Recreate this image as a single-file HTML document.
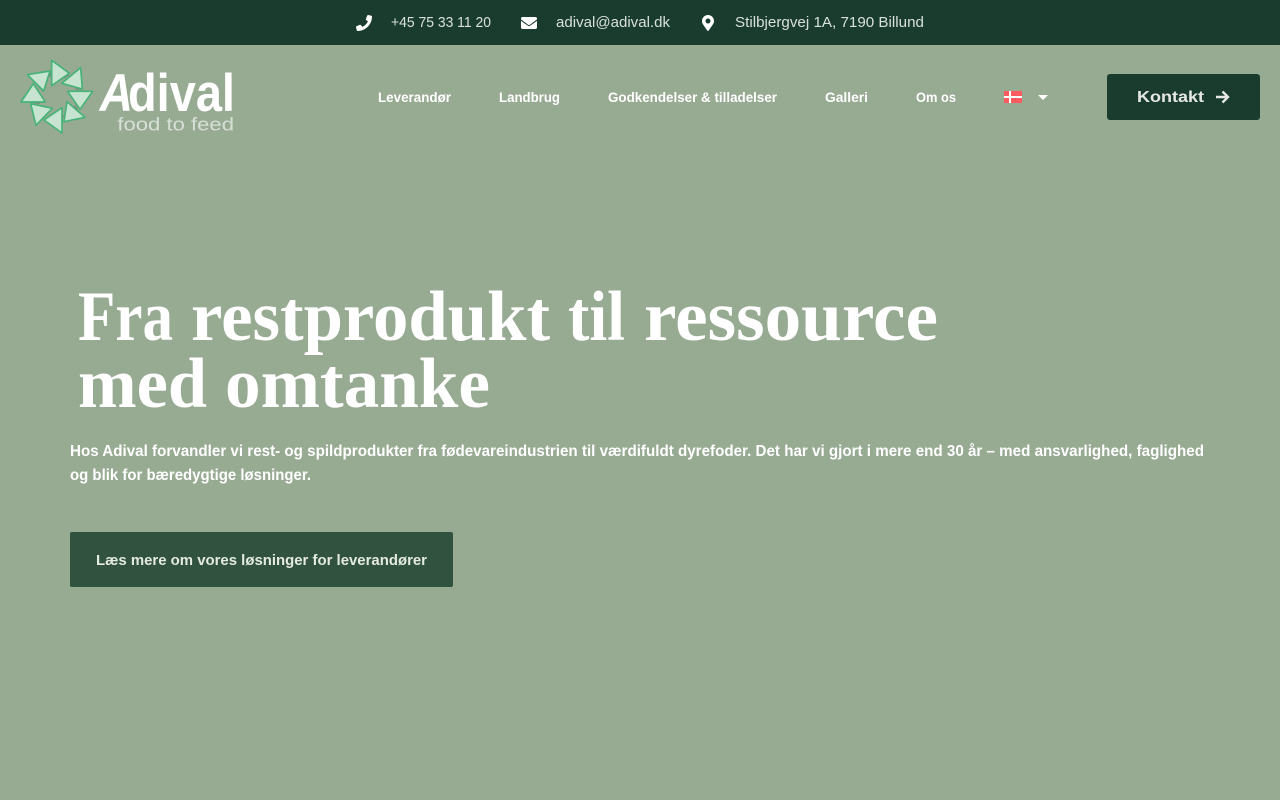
<!DOCTYPE html>
<html lang="da"><head><meta charset="utf-8"><title>Adival</title>
<style>
html,body{margin:0;padding:0;width:1280px;height:800px;overflow:hidden;background:#97aa92}
svg{display:block;position:absolute;left:0;top:0}
.top{font:400 15px "Liberation Sans",sans-serif;fill:#d8e0db}
.nav{font:700 14px "Liberation Sans",sans-serif;fill:#fff}
.h{font:700 71px "Liberation Serif",serif;fill:#fff}
.p{font:700 16px "Liberation Sans",sans-serif;fill:#fff}
</style></head><body>
<svg width="1280" height="800" viewBox="0 0 1280 800" xmlns="http://www.w3.org/2000/svg">
<rect width="1280" height="800" fill="#97aa92"/>
<rect width="1280" height="45" fill="#1a3c2e"/>
<!-- top bar -->
<path fill="#fff" transform="translate(356 15) scale(.03125)" d="M493.400 24.600l-104-24c-11.300-2.600-22.900 3.300-27.500 13.900l-48 112c-4.200 9.800-1.400 21.300 6.900 28l60.600 49.600c-36 76.700-98.900 140.500-177.200 177.200l-49.600-60.600c-6.800-8.300-18.200-11.100-28-6.900l-112 48C3.900 366.500-2 378.100.6 389.400l24 104C27.100 504.200 36.700 512 48 512c256.100 0 464-207.500 464-464 0-11.200-7.700-20.900-18.600-23.400z"/>
<text class="top" x="391" y="27" textLength="100" lengthAdjust="spacingAndGlyphs">+45 75 33 11 20</text>
<path fill="#fff" transform="translate(521 15) scale(.03125)" d="M502.300 190.800c3.900-3.100 9.700-.2 9.700 4.700V400c0 26.500-21.500 48-48 48H48c-26.500 0-48-21.500-48-48V195.600c0-5 5.700-7.800 9.700-4.700 22.400 17.400 52.100 39.500 154.100 113.600 21.100 15.400 56.700 47.800 92.200 47.600 35.700.3 71.300-32.800 92.300-47.600 102-74.100 131.600-96.300 154-113.700zM256 320c23.200.4 56.600-29.200 73.400-41.400 132.700-96.300 142.800-104.700 173.400-128.700 5.800-4.500 9.200-11.500 9.200-18.900v-19c0-26.500-21.500-48-48-48H48C21.500 64 0 85.500 0 112v19c0 7.400 3.400 14.300 9.200 18.900 30.600 23.900 40.700 32.400 173.400 128.700 16.800 12.200 50.200 41.800 73.400 41.400z"/>
<text class="top" x="556" y="27" textLength="114" lengthAdjust="spacingAndGlyphs">adival@adival.dk</text>
<path fill="#fff" transform="translate(702 15) scale(.03125)" d="M172.268 501.670C26.970 291.031 0 269.413 0 192 0 85.961 85.961 0 192 0s192 85.961 192 192c0 77.413-26.970 99.031-172.268 309.670-9.535 13.774-29.930 13.773-39.464 0zM192 272c44.183 0 80-35.817 80-80s-35.817-80-80-80-80 35.817-80 80 35.817 80 80 80z"/>
<text class="top" x="735" y="27" textLength="189" lengthAdjust="spacingAndGlyphs">Stilbjergvej 1A, 7190 Billund</text>
<!-- logo -->
<g transform="translate(0 45) scale(.33333)">
<g stroke="#7f8f82" stroke-width="6" fill="none">
<path d="M150 78v18M192 98l14-10M226 132h16M224 182l8 14M186 212l10 4M128 214l12-10M104 174h16M110 114l10 14"/>
</g>
<g fill="#c6e4d0" stroke="#46b378" stroke-width="5" stroke-linejoin="round">
<path d="M155 46L208 85L155 122Z"/>
<path d="M242 68L247 132L185 115Z"/>
<path d="M278 139L240 193L203 139Z"/>
<path d="M201 170L255 217L192 230Z"/>
<path d="M186 188L186 264L132 225Z"/>
<path d="M92 176L157 190L108 241Z"/>
<path d="M100 116L136 171L63 171Z"/>
<path d="M82 89L150 78L131 138Z"/>
</g>
<text x="299" y="198" font-family="Liberation Sans,sans-serif" font-weight="700" font-style="italic" font-size="158" fill="#fff" textLength="100" lengthAdjust="spacingAndGlyphs">A</text>
<text x="384" y="198" font-family="Liberation Sans,sans-serif" font-weight="700" font-size="158" fill="#fff" textLength="321" lengthAdjust="spacingAndGlyphs">dival</text>
<text x="352" y="256" font-family="Liberation Sans,sans-serif" font-weight="400" font-size="56" fill="#e8efe8" textLength="350" lengthAdjust="spacingAndGlyphs" opacity=".78">food to feed</text>
</g>
<!-- nav -->
<text class="nav" x="378" y="102" textLength="73" lengthAdjust="spacingAndGlyphs">Leverandør</text>
<text class="nav" x="499" y="102" textLength="61" lengthAdjust="spacingAndGlyphs">Landbrug</text>
<text class="nav" x="608" y="102" textLength="169" lengthAdjust="spacingAndGlyphs">Godkendelser &amp; tilladelser</text>
<text class="nav" x="825" y="102" textLength="43" lengthAdjust="spacingAndGlyphs">Galleri</text>
<text class="nav" x="916" y="102" textLength="40" lengthAdjust="spacingAndGlyphs">Om os</text>
<!-- flag -->
<rect x="1004" y="91" width="18" height="12" fill="#ff5a60"/>
<rect x="1009" y="91" width="2" height="12" fill="#fff"/>
<rect x="1004" y="96" width="18" height="2" fill="#fff"/>
<path d="M1038 95h10l-5 5z" fill="#fff"/>
<!-- contact -->
<rect x="1107" y="74" width="153" height="46" rx="3" fill="#1a3c2e"/>
<text x="1137" y="102" font-family="Liberation Sans,sans-serif" font-weight="700" font-size="16" fill="#e6e8e4" textLength="67" lengthAdjust="spacingAndGlyphs">Kontakt</text>
<path d="M1216 97h12M1222.500 91.500l5.500 5.500-5.500 5.500" fill="none" stroke="#e6e8e4" stroke-width="2.400"/>
<!-- hero -->
<text class="h" x="78" y="340" textLength="95" lengthAdjust="spacingAndGlyphs">Fra</text>
<text class="h" x="191" y="340" textLength="359" lengthAdjust="spacingAndGlyphs">restprodukt</text>
<text class="h" x="568" y="340" textLength="57" lengthAdjust="spacingAndGlyphs">til</text>
<text class="h" x="644" y="340" textLength="294" lengthAdjust="spacingAndGlyphs">ressource</text>
<text class="h" x="78" y="407" textLength="129" lengthAdjust="spacingAndGlyphs">med</text>
<text class="h" x="225" y="407" textLength="265" lengthAdjust="spacingAndGlyphs">omtanke</text>
<text class="p" x="70" y="456" textLength="1134" lengthAdjust="spacingAndGlyphs">Hos Adival forvandler vi rest- og spildprodukter fra fødevareindustrien til værdifuldt dyrefoder. Det har vi gjort i mere end 30 år – med ansvarlighed, faglighed</text>
<text class="p" x="70" y="480" textLength="241" lengthAdjust="spacingAndGlyphs">og blik for bæredygtige løsninger.</text>
<rect x="70" y="532" width="383" height="55" rx="2" fill="#31523f"/>
<text x="96" y="565" font-family="Liberation Sans,sans-serif" font-weight="700" font-size="15" fill="#e4e9e2" textLength="331" lengthAdjust="spacingAndGlyphs">Læs mere om vores løsninger for leverandører</text>
</svg>
</body></html>
